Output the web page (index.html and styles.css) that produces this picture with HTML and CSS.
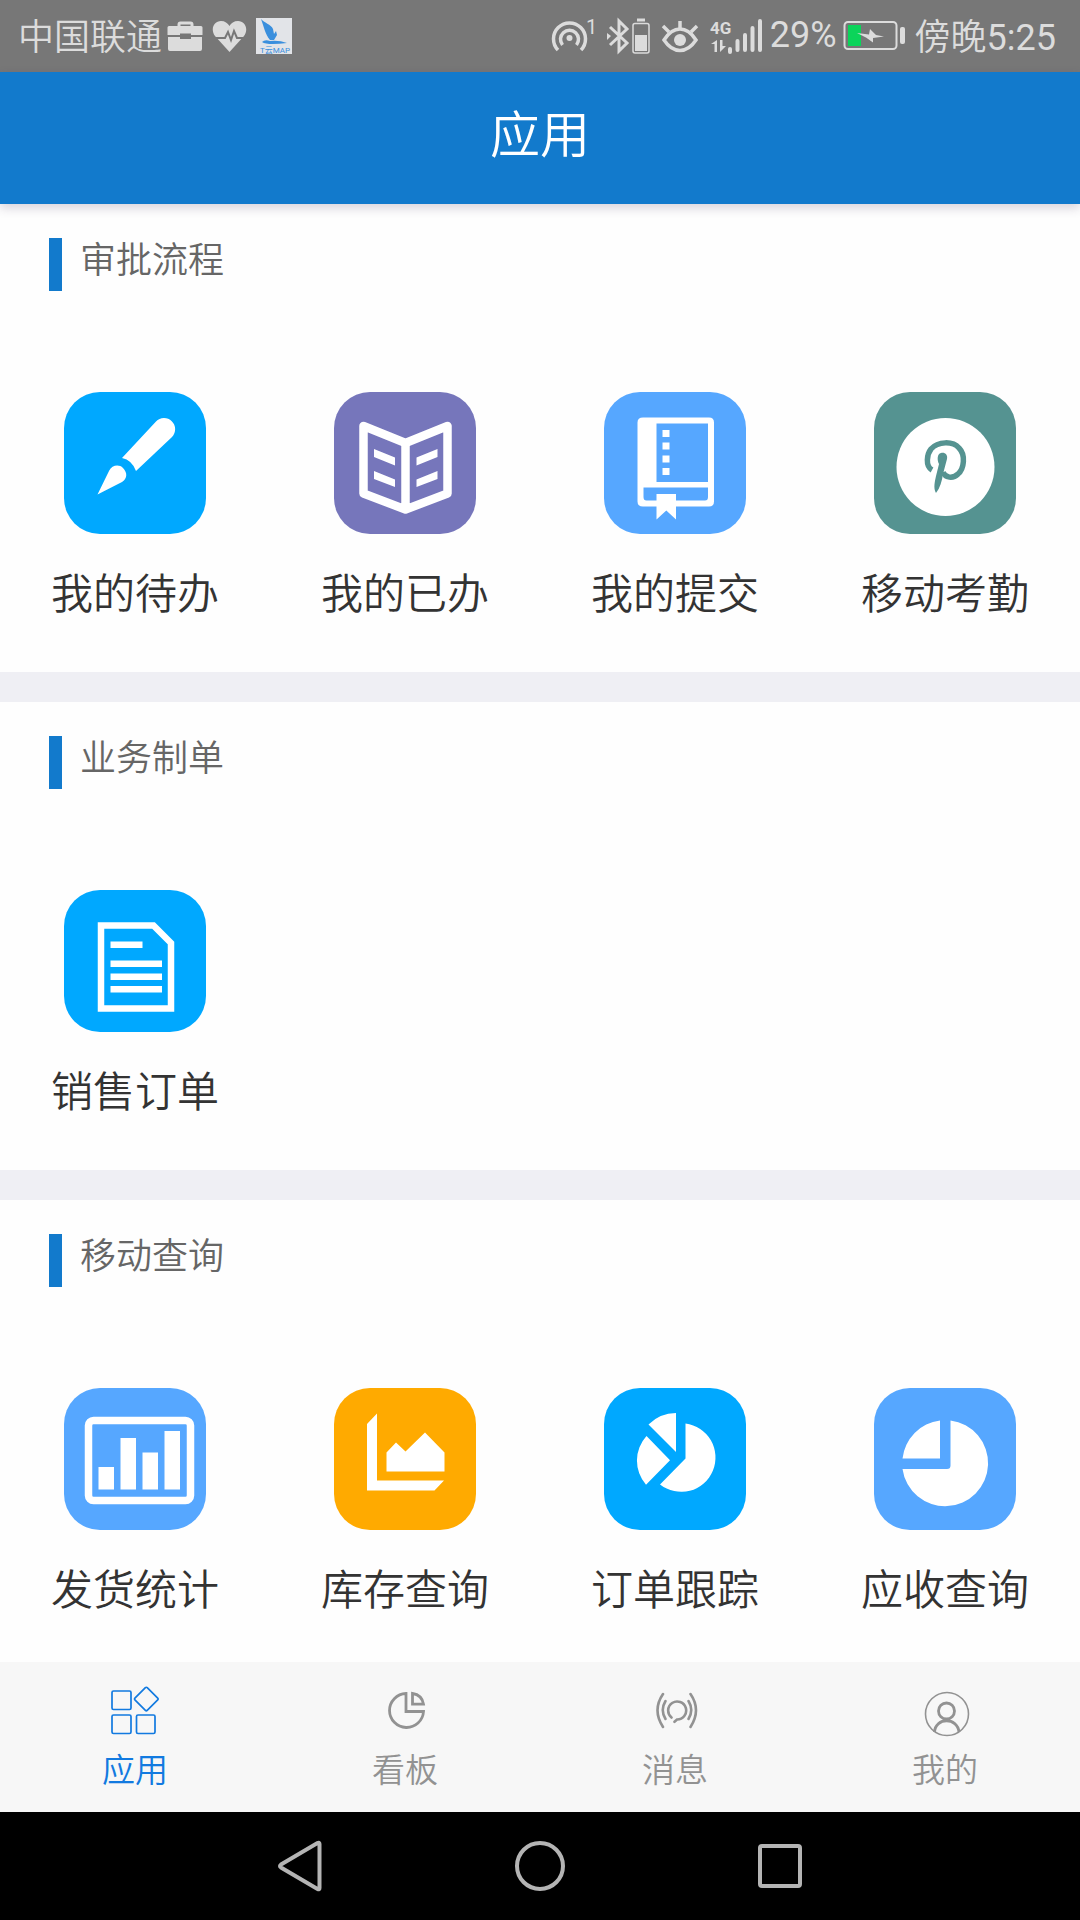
FILE: index.html
```html
<!DOCTYPE html>
<html lang="zh-CN">
<head>
<meta charset="utf-8">
<meta name="viewport" content="width=device-width, initial-scale=1">
<title>应用</title>
<link rel="stylesheet" href="styles.css">
</head>
<body>
<div class="status-bar">
  <span class="status-text"><span class="status-cjk">中国联通</span></span>
  <div class="status-notices">
    <svg width="36" height="40" viewBox="0 0 36 40" fill="currentColor"><path d="M12 10V8.500Q12 7 13.500 7h10Q25 7 25 8.500V10" fill="none" stroke="currentColor" stroke-width="3"/><path d="M2 10h32q1.500 0 1.500 1.500V19H24v-1.500H13V19H.500v-7.500Q.500 10 2 10zM1 21h12v2h11v-2h11v12q0 2-2 2H3q-2 0-2-2z"/></svg>
    <svg width="36" height="40" viewBox="0 0 36 40"><path d="M18.500 36L4 20C-1 13 3 5 10 5c4 0 6.500 2 8.500 5C20 7 23 5 27 5c7 0 11 8 6 15z" fill="currentColor"/><path d="M5 22h9l3-6 3 8 3-9 3 7h7" fill="none" stroke="#777" stroke-width="2"/></svg>
    <svg width="38" height="40" viewBox="0 0 38 40"><path d="M1 2h36v36H1z" fill="#e2e4e8"/><path d="M6 3c3 4 10 5 12 10l1 5 2-3 1 4-3 5h-4C10 18 9 11 6 3zM7 26q3-3 8-1 9-1 17 2-8 1-14 1-8 0-11-2z" fill="#3a8fdd"/><text x="20" y="37" class="notice-logo" text-anchor="middle">T云MAP</text></svg>
  </div>
  <div class="status-system">
    <svg width="50" height="40" viewBox="0 0 50 40" fill="none" stroke="currentColor" stroke-width="3.500"><path d="M8 34a16 16 0 1 1 23 0"/><path d="M12.500 29a9 9 0 1 1 14 0"/><circle cx="19.500" cy="22" r="3" fill="currentColor" stroke="none"/><text x="36" y="18" class="status-small">1</text></svg>
    <svg width="48" height="40" viewBox="0 0 48 40" fill="none" stroke="currentColor"><path d="M4 11l17 16-8 8V5l8 8L4 29" stroke-width="3"/><path d="M1 17l4 3-4 4z" fill="currentColor" stroke="none"/><rect x="27" y="7.500" width="16" height="29.500" rx="2" stroke-width="1.500"/><path d="M31 4h8" stroke-width="3"/><path d="M29 19h12v16H29z" fill="currentColor" stroke="none"/></svg>
    <svg width="44" height="40" viewBox="0 0 44 40" fill="none" stroke="currentColor" stroke-width="3.500"><path d="M4 24q7-11 16-11t16 11q-7 10.500-16 10.500T4 24z"/><circle cx="20" cy="24" r="6" fill="currentColor" stroke="none"/><path d="M20 13V5M9 16l-6-6M31 16l6-6"/></svg>
    <svg width="54" height="40" viewBox="0 0 54 40" fill="currentColor"><text x="0" y="18" class="status-network">4G</text><path d="M7 24v12H4.500v-8H1zM10 24h2.500v6H16l-6 6z"/><path d="M20 36v-3" stroke="currentColor" stroke-width="4" stroke-linecap="round"/><path d="M27.500 34V25M35 34V19M42.500 34V12M50 34V5" stroke="currentColor" stroke-width="4" stroke-linecap="round"/></svg>
    <span class="status-percent">29%</span>
    <svg width="66" height="40" viewBox="0 0 66 40"><rect x="1.500" y="6" width="52" height="27" rx="3.500" fill="none" stroke="currentColor" stroke-width="2"/><path d="M5 9h13v21H5z" fill="#0bd45a"/><path d="M14 17l12 1.500 1-5.500 6 6 8 1.500-11 1.500v4.500l-7-5z" fill="currentColor"/><rect x="57" y="11" width="5" height="17" rx="2" fill="currentColor"/></svg>
    <span class="status-text"><span class="status-cjk">傍晚</span>5:25</span>
  </div>
</div>

<header class="title-bar"><h1 class="title">应用</h1></header>

<main class="content">
  <section class="group">
    <h2 class="group-title">审批流程</h2>
    <div class="apps">
      <a class="app" href="#todo">
        <svg class="app-icon app-icon-cyan" viewBox="0 0 142 142"><path d="M58 66L92 29.500A11 11 0 0 1 108 45L72 79Q68 68 58 66zM33.500 102.500L45 79C48 73 55 72 59 76c5 5 4 11-1 14z"/></svg>
        <span class="app-name">我的待办</span>
      </a>
      <a class="app" href="#done">
        <svg class="app-icon app-icon-purple" viewBox="0 0 142 142"><path d="M29.500 34l42 17 42-17v67.500l-42 16-42-16zM71.500 51v66" fill="none" stroke="#fff" stroke-width="8.500" stroke-linejoin="round"/><path d="M40 57l21 8.500v8L40 65zM40 79l21 8.500v7.500L40 87zM103.500 57v8l-21 8.500v-8zM103.500 79v8l-21 8v-7.500z"/></svg>
        <span class="app-name">我的已办</span>
      </a>
      <a class="app" href="#submitted">
        <svg class="app-icon app-icon-blue" viewBox="0 0 142 142"><path fill-rule="evenodd" d="M39 25.500h66q5 0 5 5v79q0 5-5 5H39q-5.500 0-5.500-5v-79q0-5 5.500-5zM52.500 31.500V90H104V31.500zM39.500 95.500V105q0 3.500 3 3.500H101q3 0 3-3.500v-9.500z"/><path d="M52.500 102H72v25.500l-9.700-9-9.800 9zM58.500 38h7v7h-7zM58.500 50.500h7v7h-7zM58.500 63.500h7v7h-7zM58.500 76h7v7h-7z"/></svg>
        <span class="app-name">我的提交</span>
      </a>
      <a class="app" href="#attendance">
        <svg class="app-icon app-icon-teal" viewBox="0 0 142 142"><circle cx="71.500" cy="75" r="49"/><path d="M58 78C51 74 53 62 57 57c7-8 22-8 28-1 7 7 5 21-1 26-5 5-13 4-15-2" fill="none" stroke="#559391" stroke-width="5.500"/><path d="M67 61c4-1 7 2 6 6l-4 15c-1 7-3 14-7 19-3-5-1-12 0-17l3-12c-2-4-2-10 2-11z" fill="#559391"/></svg>
        <span class="app-name">移动考勤</span>
      </a>
    </div>
  </section>

  <section class="group">
    <h2 class="group-title">业务制单</h2>
    <div class="apps">
      <a class="app" href="#sales-order">
        <svg class="app-icon app-icon-cyan" viewBox="0 0 142 142"><path d="M37 35.500h52.500L107 53v65.500H37z" fill="none" stroke="#fff" stroke-width="6.500"/><path d="M46.500 51.500h32V58h-32zM46.500 70.500H98V77H46.500zM46.500 83.500H98V90H46.500zM46.500 96H98v6.500H46.500z"/></svg>
        <span class="app-name">销售订单</span>
      </a>
    </div>
  </section>

  <section class="group">
    <h2 class="group-title">移动查询</h2>
    <div class="apps">
      <a class="app" href="#shipping">
        <svg class="app-icon app-icon-blue" viewBox="0 0 142 142"><rect x="24.500" y="32.500" width="102" height="80" rx="5" fill="none" stroke="#fff" stroke-width="7.500"/><path d="M34.500 79H50v22.500H34.500zM56.500 50H72v51.500H56.500zM78.500 64.500H94v37H78.500zM100.500 43H116v58.500h-15.500z"/></svg>
        <span class="app-name">发货统计</span>
      </a>
      <a class="app" href="#stock">
        <svg class="app-icon app-icon-orange" viewBox="0 0 142 142"><path d="M33 36l10-10.500v67h67l-9.500 10H33zM52.500 64.500L62 54.500l9.500 9L91 44.500l19.500 20v19h-58z"/></svg>
        <span class="app-name">库存查询</span>
      </a>
      <a class="app" href="#tracking">
        <svg class="app-icon app-icon-cyan" viewBox="0 0 142 142"><path d="M72 25v39L44.500 36.500A39 39 0 0 1 72 25zM42.500 48L66 72.300 42 96.700A36.500 36.500 0 0 1 42.500 48zM81.500 35.500A34.300 34.300 0 1 1 56 96.500l25.500-26z"/></svg>
        <span class="app-name">订单跟踪</span>
      </a>
      <a class="app" href="#receivable">
        <svg class="app-icon app-icon-blue" viewBox="0 0 142 142"><path d="M66 32.500v38H28.500A43 43 0 0 1 66 32.500zM76.500 32.500A43 43 0 1 1 28.500 81H73q3.500 0 3.500-3.500z"/></svg>
        <span class="app-name">应收查询</span>
      </a>
    </div>
  </section>
</main>

<nav class="tabs">
  <a class="tab tab-active" href="#apps">
    <svg class="tab-icon" viewBox="0 0 52 52" stroke-width="1.700"><rect x="3" y="5" width="19" height="18.500" rx="1.500"/><rect x="3" y="29" width="19" height="18.500" rx="1.500"/><rect x="27.500" y="29" width="18.500" height="18.500" rx="1.500"/><path d="M36.400 1.700q.900-.900 1.800 0l10.500 10.400q.900.900 0 1.800L38.200 24.300q-.900.900-1.800 0L25.900 13.900q-.900-.900 0-1.800z"/></svg>
    <span class="tab-name">应用</span>
  </a>
  <a class="tab" href="#board">
    <svg class="tab-icon" viewBox="0 0 52 52" stroke-width="2.800"><path d="M27 7.500v18h17.500A17 17 0 1 1 27 7.500zM33.500 7.500v10.700h11Q43 9 33.500 7.500z"/></svg>
    <span class="tab-name">看板</span>
  </a>
  <a class="tab" href="#messages">
    <svg class="tab-icon" viewBox="0 0 52 52" stroke-width="2.600" stroke-linecap="round"><path d="M22.500 31.500A9 9 0 1 1 28 33.500l-2.500 2.300M16.500 15q-5.500 9 0 18M39.500 15q5.500 9 0 18M14 8q-11 16 0 33M41.500 8q11 16 0 33"/></svg>
    <span class="tab-name">消息</span>
  </a>
  <a class="tab" href="#me">
    <svg class="tab-icon" viewBox="0 0 52 52" stroke-width="2.800"><circle cx="28" cy="28" r="21.500" stroke-width="1.600"/><circle cx="27.500" cy="25" r="8"/><path d="M15.500 46c1-15 23-15 24.500 0"/></svg>
    <span class="tab-name">我的</span>
  </a>
</nav>

<div class="system-nav">
  <button class="system-button" type="button" aria-label="返回"><svg width="52" height="52" viewBox="0 0 52 52"><path d="M7 24.500L43.500 3q2-1 2 1v44q0 2-2 1L7 27.500q-2-1.500 0-3z"/></svg></button>
  <button class="system-button" type="button" aria-label="主页"><svg width="52" height="52" viewBox="0 0 52 52"><circle cx="26" cy="26" r="23"/></svg></button>
  <button class="system-button" type="button" aria-label="最近任务"><svg width="52" height="52" viewBox="0 0 52 52"><rect x="6" y="6" width="40" height="40" rx="2"/></svg></button>
</div>
</body>
</html>
```
FILE: styles.css
```css
* {
  box-sizing: border-box;
}

body {
  margin: 0;
  height: 100vh;
  display: flex;
  flex-direction: column;
  font-family: "Noto Sans CJK SC", sans-serif;
  font-weight: 350;
  color: #333;
  background: #efeff4;
}

a {
  color: inherit;
  text-decoration: none;
}

svg {
  display: block;
  flex: none;
}

/* Phone status bar */
.status-bar {
  display: flex;
  align-items: center;
  gap: 5px;
  height: 72px;
  padding: 0 24px 0 18px;
  background: #777;
  color: #dcdcdc;
  font-family: Roboto, "Noto Sans CJK SC", sans-serif;
  font-size: 36px;
  font-weight: 400;
  line-height: 40px;
  white-space: nowrap;
}

.status-notices {
  display: flex;
  gap: 8px;
}

.status-system {
  display: flex;
  align-items: center;
  gap: 6px;
  margin-left: auto;
}

.status-text {
  padding-top: 3px;
}

.status-cjk {
  font-weight: 350;
}

.status-percent {
  padding-bottom: 3px;
}

.status-small,
.status-network {
  font-size: 20px;
  fill: currentColor;
  stroke: none;
}

.status-network {
  font-size: 17px;
  font-weight: 700;
}

.notice-logo {
  font-size: 8px;
  fill: #3a8fdd;
}

/* Page title */
.title-bar {
  position: relative;
  z-index: 1;
  display: flex;
  align-items: center;
  justify-content: center;
  height: 132px;
  padding-bottom: 14px;
  background: #127acc;
  color: #fff;
  box-shadow: 0 4px 10px rgba(60, 40, 80, 0.2);
}

.title {
  margin: 0;
  font-size: 50px;
  font-weight: 350;
  line-height: 60px;
}

/* App groups */
.content {
  flex: 1;
  min-height: 0;
  overflow-y: auto;
  scrollbar-width: none;
  display: flex;
  flex-direction: column;
  gap: 30px;
}

.group {
  flex: none;
  padding: 34px 0 51px;
  background: #fefefe;
}

.group-title {
  height: 53px;
  margin: 0 0 101px 49px;
  padding-left: 18px;
  border-left: 13px solid #127acc;
  color: #666;
  font-size: 36px;
  font-weight: 350;
  line-height: 38px;
}

.apps {
  display: grid;
  grid-template-columns: repeat(4, 1fr);
}

.app {
  display: flex;
  flex-direction: column;
  align-items: center;
  gap: 27px;
}

.app-icon {
  width: 142px;
  height: 142px;
  border-radius: 36px;
  fill: #fff;
}

.app-icon-cyan {
  background: #00a8ff;
}

.app-icon-purple {
  background: #7676bb;
}

.app-icon-blue {
  background: #56a7ff;
}

.app-icon-teal {
  background: #559391;
}

.app-icon-orange {
  background: #ffaa00;
}

.app-name {
  font-size: 42px;
  line-height: 60px;
}

/* Tab bar */
.tabs {
  display: grid;
  grid-template-columns: repeat(4, 1fr);
  padding: 24px 0 22px;
  background: #f7f7f7;
  color: #929292;
}

.tab {
  display: flex;
  flex-direction: column;
  align-items: center;
  gap: 8px;
}

.tab-active {
  color: #127ae0;
}

.tab-icon {
  width: 52px;
  height: 52px;
  fill: none;
  stroke: currentColor;
}

.tab-name {
  font-size: 33px;
  line-height: 44px;
}

/* System navigation keys */
.system-nav {
  display: grid;
  grid-template-columns: repeat(3, 1fr);
  height: 108px;
  padding: 0 calc(100% / 6);
  background: #000;
}

.system-button {
  display: flex;
  align-items: center;
  justify-content: center;
  padding: 0;
  border: 0;
  background: none;
  color: #b4b4b4;
}

.system-button svg {
  fill: none;
  stroke: currentColor;
  stroke-width: 4px;
}
```
